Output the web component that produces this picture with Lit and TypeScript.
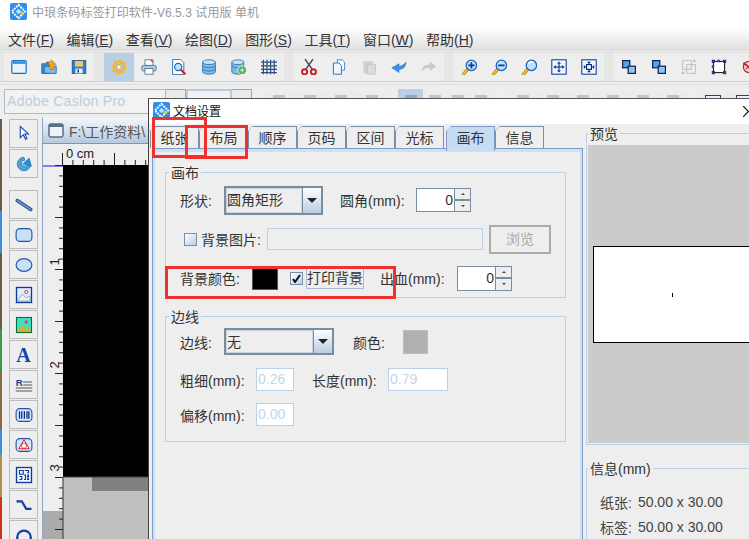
import { LitElement, html, css, svg } from "lit";
import { customElement } from "lit/decorators.js";

const mag = (sign: string) => svg`<line x1="3" y1="19" x2="9" y2="12" stroke="#b8860b" stroke-width="4" stroke-linecap="round"/><line x1="3" y1="19" x2="8" y2="13" stroke="#f3c53a" stroke-width="2" stroke-linecap="round"/><circle cx="13" cy="8" r="6.5" fill="#bfe0fb" stroke="#1466c8" stroke-width="1.6"/>${sign === "+" ? svg`<path d="M9 8h8M13 4v8" stroke="#12389a" stroke-width="2.2"/>` : sign === "-" ? svg`<path d="M9 8h8" stroke="#12389a" stroke-width="2.2"/>` : svg`<path d="M9 6a5 4 0 0 1 6-2" stroke="#fff" fill="none" stroke-width="1.6"/>`}`;

const arrowsOut = svg`<rect x="1" y="1" width="18" height="18" fill="#f4f8ff" stroke="#0b3a94" stroke-width="1.300"/><path d="M10 3l-2.500 3h5zM10 17l-2.500-3h5zM3 10l3-2.500v5zM17 10l-3-2.500v5z" fill="#0b2f8a"/><rect x="9.300" y="6" width="1.400" height="8" fill="#0b2f8a"/><rect x="6" y="9.300" width="8" height="1.400" fill="#0b2f8a"/>`;
const arrowsIn = svg`<rect x="1" y="1" width="18" height="18" fill="#f4f8ff" stroke="#0b3a94" stroke-width="1.300"/><rect x="7" y="7" width="6" height="6" fill="#fff" stroke="#0b2f8a" stroke-width="1.500"/><path d="M10 6.500l-2.500-3h5zM10 13.500l-2.500 3h5zM6.500 10l-3-2.500v5zM13.500 10l3-2.500v5z" fill="#0b2f8a"/>`;
const pair = svg`<rect x="2" y="2" width="9" height="9" fill="#4ea4ee" stroke="#10204f" stroke-width="1.500"/><rect x="9" y="9" width="9" height="9" fill="#8cc6f5" stroke="#10204f" stroke-width="1.500"/>`;

const toolIcons: Record<string, unknown> = {
  window: svg`<rect x="1" y="2" width="18" height="16" rx="1.500" fill="#e8f2fc" stroke="#1b6fbd" stroke-width="1.500"/><rect x="2" y="3" width="16" height="3" fill="#2f88d8"/>`,
  open: svg`<path d="M1 6h5l1-2h3v14H1z" fill="#3f95d8" stroke="#145a96"/><path d="M4 9h15v9H4z" fill="#79bdeb" stroke="#145a96"/><path d="M13 1l6 6h-3v6h-5V7H8z" fill="#f2a322" stroke="#b86e08" stroke-width=".7"/>`,
  save: svg`<rect x="1.500" y="2" width="17" height="16" fill="#2d80c9" stroke="#154f86"/><rect x="5" y="2.500" width="10" height="7" fill="#f7c46a"/><rect x="5.500" y="12" width="9" height="6" fill="#e8eef5"/><rect x="8" y="13" width="2" height="4" fill="#154f86"/>`,
  gear: svg`<circle cx="10" cy="10" r="6.500" fill="none" stroke="#eeb440" stroke-width="3.500"/><circle cx="10" cy="10" r="9" fill="none" stroke="#f0bd4c" stroke-width="2.400" stroke-dasharray="3.200 3.800"/><circle cx="10" cy="10" r="3" fill="#fff6d8" stroke="#c48a20"/>`,
  print: svg`<rect x="5" y="1" width="10" height="7" fill="#fff" stroke="#4c6a8c"/><path d="M12 1l3 3" stroke="#d22" stroke-width="1.500"/><rect x="1" y="8" width="18" height="7" rx="2" fill="#a9cdec" stroke="#2f6da6"/><rect x="5" y="12" width="10" height="7" fill="#fff" stroke="#4c6a8c"/>`,
  preview: svg`<path d="M2 0.500h10l4 4v15H2z" fill="#fff" stroke="#2a73b8" stroke-width="1.200"/><circle cx="9" cy="10" r="4.500" fill="#bfe0fb" stroke="#1466c8" stroke-width="1.400"/><line x1="12" y1="13" x2="18" y2="19" stroke="#c8242a" stroke-width="2.600"/>`,
  db: svg`<path d="M2 4v12c0 4 16 4 16 0V4z" fill="#7fbbe8" stroke="#1f6aa8"/><ellipse cx="10" cy="4" rx="8" ry="3" fill="#c6e2f6" stroke="#1f6aa8"/><path d="M2 8c0 4 16 4 16 0M2 12c0 4 16 4 16 0" fill="none" stroke="#1f6aa8"/>`,
  dbplus: svg`<path d="M1 4v12c0 4 15 4 15 0V4z" fill="#7fbbe8" stroke="#1f6aa8"/><ellipse cx="8.500" cy="4" rx="7.500" ry="3" fill="#c6e2f6" stroke="#1f6aa8"/><path d="M1 8c0 4 15 4 15 0" fill="none" stroke="#1f6aa8"/><circle cx="14" cy="14" r="5.500" fill="#4bb04f" stroke="#fff"/><path d="M11 14h6M14 11v6" stroke="#fff"/>`,
  grid: svg`<path d="M3 1v18M7.500 1v18M12 1v18M16.500 1v18M0 4h20M0 8.500h20M0 13h20M0 17h20" stroke="#2b4f7e" stroke-width="1.500"/>`,
  cut: svg`<path d="M5 0l9 13M15 0L6 13" stroke="#3f4a5c" stroke-width="1.800"/><circle cx="4.500" cy="16" r="3.200" fill="none" stroke="#c61f26" stroke-width="2.400"/><circle cx="15.500" cy="16" r="3.200" fill="none" stroke="#c61f26" stroke-width="2.400"/>`,
  copy: svg`<path d="M8 1h6l3 3v10H8z" fill="#fff" stroke="#2a73b8"/><path d="M3 5h7l3 3v11H3z" fill="#eef6fd" stroke="#2a73b8" stroke-width="1.200"/>`,
  paste: svg`<rect x="3" y="3" width="12" height="15" fill="#cfcfcf"/><rect x="8" y="7" width="10" height="12" fill="#dcdcdc" stroke="#c4c4c4"/>`,
  undo: svg`<path d="M19 4c-1 7-5 9-9 9v4L1 11l9-5v3c3 0 6-2 9-5z" fill="#3a92e0" stroke="#1d62ad" stroke-width=".6"/>`,
  redo: svg`<path d="M1 15c0-5 4-8 10-8V3l8 6-8 6v-4c-4 0-8 1-10 4z" fill="#c9c9c9"/>`,
  zin: mag("+"), zout: mag("-"), zfit: mag(""),
  fout: arrowsOut, fin: arrowsIn,
  up: pair,
  down: svg`${pair}`,
  grp: svg`<rect x="2" y="2" width="11" height="11" fill="none" stroke="#c8c8c8" stroke-width="1.500"/><rect x="7" y="7" width="11" height="11" fill="none" stroke="#c8c8c8" stroke-width="1.500"/><rect x="15" y="1" width="3" height="3" fill="#c0c0c0"/><rect x="1" y="16" width="3" height="3" fill="#c0c0c0"/>`,
  ungrp: svg`<rect x="3" y="3" width="14" height="14" fill="#fff" stroke="#111" stroke-width="1.300"/><path d="M1 1h4v4H1zM15 1h4v4h-4zM1 15h4v4H1zM15 15h4v4h-4zM8 1h3v3H8zM1 8h3v3H1z" fill="#33338c"/>`,
  del: svg`<circle cx="10" cy="10" r="7" fill="#f3d0d0" stroke="#c61f26" stroke-width="1.500"/><path d="M3 5l14 10" stroke="#c61f26" stroke-width="2"/><path d="M6 12l8-3" stroke="#222"/>`,
};

const sideIcons: Record<string, unknown> = {
  arrow: svg`<path d="M7 3v15l4-4 3 6 2-1-3-6h5z" transform="translate(0 -1)" fill="#fff" stroke="#1446ad" stroke-width="1.400"/>`,
  rotate: svg`<path d="M12 3a9 9 0 1 0 9 10h-5a4 4 0 1 1-3-6z" fill="#49a6dc" stroke="#1a6fa8"/><path d="M10 12l9-8 3 11z" fill="#2a8ccc" stroke="#1a6fa8" stroke-width=".6"/>`,
  line: svg`<line x1="3" y1="6" x2="21" y2="18" stroke="#23468f" stroke-width="4.500" stroke-linecap="round"/><line x1="3" y1="6" x2="21" y2="18" stroke="#6f92cf" stroke-width="2.200" stroke-linecap="round"/>`,
  rect: svg`<rect x="1.500" y="3.500" width="21" height="17" rx="5" fill="#c9e0f7" stroke="#1f55ad" stroke-width="1.500"/>`,
  ellipse: svg`<ellipse cx="12" cy="12" rx="10.500" ry="8.500" fill="#c9e0f7" stroke="#1f55ad" stroke-width="1.500"/>`,
  image: svg`<rect x="2" y="2" width="20" height="20" fill="#dfeefa" stroke="#0d3b9a" stroke-width="1.800"/><path d="M4 18l6-7 5 5 5-3v7H4z" fill="#f2f2f2" stroke="#7b8aa5"/><circle cx="15" cy="8" r="2.200" fill="none" stroke="#d83636" stroke-width="1.200"/>`,
  photo: svg`<rect x="2" y="2" width="20" height="20" fill="#40e0c8" stroke="#0f6a3a" stroke-width="1.500"/><path d="M3 21l7-9 5 6 3-3 4 6z" fill="#d8b021"/><circle cx="15" cy="8" r="2.500" fill="#e05050"/>`,
  rich: svg`<text x="1" y="13" font-family="Liberation Sans, sans-serif" font-weight="700" font-size="13" fill="#1c3f94">R</text><path d="M11 8h12M11 12h12M1 16h22M1 20h22" stroke="#555" stroke-width="1.300"/>`,
  barcode: svg`<rect x="1.500" y="3.500" width="21" height="17" rx="5" fill="#d5e6f8" stroke="#1f55ad" stroke-width="1.500"/><path d="M6 7v10M9 7v10M12.500 7v10M16 7v10M18.500 7v10" stroke="#0e2a86" stroke-width="1.700"/>`,
  shape: svg`<rect x="1.500" y="3.500" width="21" height="17" rx="5" fill="#d5e6f8" stroke="#1f55ad" stroke-width="1.500"/><path d="M12 5l7 12H5z" fill="#fff" stroke="#e01818" stroke-width="1.300"/><circle cx="12" cy="13" r="3.500" fill="none" stroke="#e01818"/>`,
  qr: svg`<rect x="2" y="2" width="20" height="20" fill="#eef5fc" stroke="#0d3b9a" stroke-width="1.800"/><path d="M6 6h5v5H6zM13 6h5v3h-2M6 14h3v4H6M12 12h2v6h-2M16 12h2v2h-2M16 16h2v2h-2" fill="none" stroke="#0d3b9a" stroke-width="1.500"/>`,
  curve: svg`<path d="M2 7h7l6 10h7" fill="none" stroke="#16409f" stroke-width="3"/>`,
  arc: svg`<path d="M3 24V15a9 9 0 0 1 18 0v9" fill="none" stroke="#16409f" stroke-width="3"/>`,
};

const g1 = ["window", "open", "save"];
const g2 = ["gear", "print", "preview", "db", "dbplus", "grid"];
const g3 = ["cut", "copy", "paste", "undo", "redo"];
const g4 = ["zin", "zout", "zfit", "fout", "fin"];
const g5 = ["up", "down", "grp", "ungrp", "del"];

const menus: [string, string][] = [["文件", "F"], ["编辑", "E"], ["查看", "V"], ["绘图", "D"], ["图形", "S"], ["工具", "T"], ["窗口", "W"], ["帮助", "H"]];
const tabs = ["纸张", "布局", "顺序", "页码", "区间", "光标", "画布", "信息"];
const sideTop = ["arrow", "rotate"];
const sideRest = ["line", "rect", "ellipse", "image", "photo", "text", "rich", "barcode", "shape", "qr", "curve", "arc"];

const marks = (n: number) => Array.from({ length: n }, () => html`<i></i>`);

const logo = html`<svg class="logo" viewBox="0 0 18 18"><rect width="18" height="18" rx="2" fill="#2f8fe8"/><path d="M9 2l7 7-7 7-7-7z" fill="none" stroke="#fff" stroke-width="2" stroke-dasharray="2 1"/><path d="M9 6l3 3-3 3-3-3z" fill="#bfe3ff"/><circle cx="13" cy="11" r="2" fill="#f3c63a"/></svg>`;

@customElement("app-root")
export class AppRoot extends LitElement {
  static styles = css`
    :host { display: block; width: 749px; height: 539px; overflow: hidden; position: relative; background: #eee;
      font-family: "Liberation Sans", "Noto Sans CJK SC", sans-serif; color: #333; font-size: 14px; }
    .title { height: 27px; background: #fff; display: flex; align-items: center; padding-left: 10px; gap: 5px; color: #999; font-size: 12.100px; box-sizing: border-box; padding-bottom: 5px; }
    .logo { width: 17px; height: 17px; flex: none; }
    .menu { height: 24px; background: linear-gradient(#fff, #dedede); display: flex; align-items: center; padding-left: 8px; gap: 12.600px; }
    .menu span { white-space: nowrap; }
    .menu u { text-decoration: underline; color: #334; }
    .tb { height: 30px; margin-top: 1px; background: #e6e6e6; display: flex; border-top: 1px solid #ddd; border-bottom: 1px solid #d0d0d0; padding-left: 4px; box-sizing: border-box; gap: 10px; }
    .grp { display: flex; background: #eee; }
    .btn { width: 30px; height: 28px; display: flex; align-items: center; justify-content: center; }
    .btn.on { background: #b9cfe6; }
    .btn svg { width: 16px; height: 16px; }
    .tb2 { height: 32px; box-sizing: border-box; margin-top: 2px; display: flex; background: #eee; padding: 4px 0 0 4px; overflow: hidden; border-top: 1px solid #ddd; }
    .fontbox { width: 162px; height: 25px; border: 1px solid #b0b8c0; background: #f2f2f2; color: #b9cde0; padding: 0 0 0 2px; line-height: 23px; font-size: 14px; letter-spacing: .3px; box-sizing: border-box; flex: none; }
    .drop { width: 20px; height: 25px; flex: none; border: 1px solid #a8a8a8; border-left: none; box-sizing: border-box; background: #eaeaea; }
    .sizebox { width: 46px; height: 25px; border: 2px solid #b8cce0; background: #f2f2f2; box-sizing: border-box; flex: none; }
    .tg { height: 28px; display: flex; justify-content: space-around; padding-top: 6px; box-sizing: border-box; background: linear-gradient(#eee, #e0e0e0); flex: none; }
    .tg i { display: block; width: 12px; height: 5px; background: #c4c4c4; }
    .tg1 { width: 125px; margin-left: 11px; }
    .tg2 { width: 25px; margin-left: 10px; background: #b9cfe6; }
    .tg2 i { background: #98aac0; }
    .tg3 { width: 70px; }
    .tg4 { width: 180px; margin-left: 15px; }
    .tg5 { width: 60px; margin-left: 10px; gap: 15px; justify-content: flex-start; padding-left: 7px; }
    .tg5 i { width: 14px; height: 10px; border: 1px solid #33445a; background: #eef; flex: none; }
    .work { display: flex; height: 423px; padding-top: 3px; box-sizing: border-box; }
    .strip { width: 2px; height: 420px; background: linear-gradient(#6a5a48 0 22%, #3f8fd8 22% 32%, #6a5a48 32% 50%, #3b9a48 50% 60%, #8a6a40 60% 74%, #3f8fd8 74% 80%, #b09050 80% 90%, #d03020 90%); flex: none; }
    .side { width: 29px; margin: 0 4px 0 7px; display: flex; flex-direction: column; gap: 1px; flex: none; }
    .side .sb { width: 27px; height: 27px; border: 1px solid #bcbcbc; background: #eee; display: flex; align-items: center; justify-content: center; flex: none; }
    .side .sb svg { width: 18px; height: 18px; overflow: hidden; }
    .side .glyph { font-family: "Liberation Serif", serif; font-weight: 700; font-size: 20px; line-height: 20px; color: #1445a6; }
    .side .sp { height: 10px; flex: none; }
    .docwrap { width: 105px; border-left: 1px solid #8ea4bf; flex: none; margin-top: -1px; }
    .doctab { height: 25px; background: linear-gradient(#f2f6fb, #b6c9e0); display: flex; align-items: center; gap: 5px; padding-left: 5px; font-size: 14px; color: #555; white-space: nowrap; overflow: hidden; border-bottom: 1px solid #7f97b5; }
    .doctab svg { width: 16px; height: 15px; flex: none; }
    .ruler { display: block; width: 105px; height: 395px; }

    .dialog { position: absolute; left: 148px; top: 98px; width: 601px; height: 441px; background: #eee; border-left: 1px solid #444; border-top: 1px solid #555; box-sizing: border-box; display: flex; flex-direction: column; }
    .dtitle { height: 25px; box-sizing: border-box; padding: 0 0 2px 4px; flex: none; background: #fff; display: flex; align-items: center; gap: 3px; font-size: 12px; color: #111; position: relative; }
    .close { position: absolute; right: 0; top: 7px; width: 6px; height: 11px; }
    .dbody { flex: 1; display: flex; min-height: 0; padding-left: 3px; }
    .left { width: 431px; flex: none; display: flex; flex-direction: column; padding-top: 2px; }
    .tabs { display: flex; height: 22px; flex: none; margin-left: -2px; }
    .tab { width: 49px; height: 22px; box-sizing: border-box; border: 1px solid #7d8fa3; border-bottom: none; text-align: center; line-height: 23px; font-size: 14px; color: #333;
      clip-path: polygon(5px 0, 100% 0, 100% 100%, 0 100%, 0 5px); margin-right: 0;
      background: linear-gradient(135deg, transparent 3px, #7d8fa3 3px, #7d8fa3 4px, #eee 4px); background-origin: border-box; }
    .tab.sel { background: linear-gradient(135deg, transparent 3px, #7d9bc9 3px, #7d9bc9 4px, #c6dcf2 4px); background-origin: border-box; border-color: #7d9bc9; height: 25px; margin: 0 0 -3px 2px; position: relative; z-index: 1; }
    .panel { flex: 1; border: 1px solid #7d9bc9; border-bottom: none; box-sizing: border-box; }
    .pinner { height: 100%; border: 2px solid #cfe0f3; border-top-width: 3px; border-bottom: none; box-sizing: border-box; padding: 20px 0 0 10px; display: flex; flex-direction: column; gap: 18px; }
    .group { position: relative; border: 1px solid #bcd0e6; box-sizing: border-box; width: 401px; flex: none; }
    .g1 { height: 126px; padding: 12px 0 0 14px; display: flex; flex-direction: column; gap: 9px; }
    .g2 { height: 126px; padding: 11px 0 0 14px; display: flex; flex-direction: column; gap: 0; }
    .legend { position: absolute; left: 3px; top: -10px; background: #eee; padding: 0 2px; font-size: 14px; line-height: 20px; color: #333; }
    .row { display: flex; align-items: center; height: 30px; flex: none; white-space: nowrap; }
    .lab44 { width: 44px; flex: none; }
    .combo { display: flex; height: 29px; border: 2px solid #7a8c9f; box-sizing: border-box; background: #eee; flex: none; }
    .c98 { width: 99px; }
    .c110 { width: 110px; height: 27px; }
    .combo .ct { flex: 1; border: 1px solid #c9d4e0; padding-left: 0; line-height: 23px; background: #eee; }
    .combo .cb { width: 18px; flex: none; background: linear-gradient(#fff, #b9cde2); border-left: 1px solid #7a8c9f; display: flex; align-items: center; justify-content: center; }
    .combo .cb i { border: 5px solid transparent; border-top: 5px solid #222; border-bottom: none; display: block; }
    .ml18 { margin-left: 18px; }
    .ml17 { margin-left: 17px; }
    .w76 { width: 76px; flex: none; }
    .spin { display: flex; width: 55px; height: 24px; flex: none; border: 1px solid #7a8c9f; box-sizing: border-box; }
    .spin.tall { height: 25px; }
    .spin .sv { flex: 1; background: #fff; text-align: right; padding-right: 1px; line-height: 23px; font-size: 14px; border-bottom: 1px solid #fff; }
    .spin .sa { width: 15px; flex: none; display: flex; flex-direction: column; border-left: 1px solid #7a8c9f; background: #eee; }
    .spin .sa b { flex: 1; display: flex; align-items: center; justify-content: center; font-size: 0; }
    .spin .sa b + b { border-top: 2px solid #7a8c9f; }
    .spin .sa i { display: block; border: 2px solid transparent; }
    .spin .sa .u { border-bottom: 2px solid #444; border-top: none; }
    .spin .sa .d { border-top: 2px solid #444; border-bottom: none; }
    .chk { width: 13px; height: 13px; box-sizing: border-box; border: 1px solid #7a8ea6; background: linear-gradient(135deg, #fff, #b7cde6); flex: none; display: flex; align-items: center; justify-content: center; }
    .chk svg { width: 9px; height: 9px; }
    .ml4 { margin-left: 4px; }
    .chkl { margin-left: 4px; width: 64px; flex: none; }
    .field { width: 216px; height: 22px; flex: none; border: 1px solid #bcd0e6; box-sizing: border-box; margin-left: 2px; }
    .browse { width: 62px; height: 29px; flex: none; border: 2px solid #ababab; box-sizing: border-box; margin-left: 6px; text-align: center; line-height: 25px; color: #aaa; }
    .l72 { width: 72px; flex: none; }
    .swatch { width: 26px; height: 23px; flex: none; background: #000; border: 1px solid #555; box-sizing: border-box; }
    .ml12 { margin-left: 12px; }
    .focus { border: 1px solid #a8bcd2; height: 22px; line-height: 20px; box-sizing: border-box; margin-left: 3px; width: 58px; flex: none; }
    .l76 { width: 76px; flex: none; }
    .l76b { width: 77px; flex: none; margin-left: 16px; }
    .gray { width: 25px; height: 24px; flex: none; background: #b0b0b0; border: 1px solid #bbb; box-sizing: border-box; margin-left: 18px; }
    .rowb { height: 27px; margin-bottom: 13px; }
    .rowc { height: 23px; margin-bottom: 12px; }
    .inp { height: 23px; border: 1px solid #b8d0ea; background: #fff; box-sizing: border-box; color: #c3d6ea; line-height: 21px; padding-left: 1px; font-size: 14px; flex: none; width: 38px; }
    .w60 { width: 60px; }
    .ml19 { margin-left: 19px; }
    .right { flex: 1; padding: 9px 0 0 3px; display: flex; flex-direction: column; overflow: hidden; }
    .pv { position: relative; border: 1px solid #bcd0e6; border-right: none; height: 312px; box-sizing: border-box; padding: 11px 0 1px 1px; flex: none; }
    .pvin { background: #cbcbcb; height: 298px; padding-top: 101px; box-sizing: border-box; padding-left: 5px; }
    .paper { height: 97px; background: #fff; border: 1px solid #000; border-right: none; box-sizing: border-box; display: flex; align-items: center; justify-content: center; }
    .paper i { width: 1px; height: 4px; background: #000; display: block; margin-left: 2px; }
    .info { position: relative; border: 1px solid #bcd0e6; border-right: none; border-bottom: none; margin-top: 23px; flex: 1; padding: 23px 0 0 13px; display: flex; flex-direction: column; gap: 5px; font-size: 14px; }
    .info div { display: flex; gap: 6px; height: 20px; align-items: center; color: #444; }
    .pvl { left: 1px; top: -10px; }
    .red { position: absolute; border: 3px solid #f33030; box-sizing: border-box; pointer-events: none; }
    .ra { left: 152px; top: 117px; width: 55px; height: 41px; }
    .rb { left: 185px; top: 125px; width: 63px; height: 34px; }
    .rc { left: 165px; top: 266px; width: 231px; height: 33px; }
  `;

  private toolBtn(n: string, on = false) {
    return html`<div class="btn ${on ? "on" : ""}"><svg viewBox="0 0 20 20">${toolIcons[n]}</svg></div>`;
  }
  private sideBtn(n: string) {
    if (n === "text") return html`<div class="sb"><span class="glyph">A</span></div>`;
    return html`<div class="sb"><svg viewBox="0 0 24 24">${sideIcons[n]}</svg></div>`;
  }
  private spinner(v: string, tall = false) {
    return html`<div class="spin ${tall ? "tall" : ""}"><div class="sv">${v}</div><div class="sa"><b><i class="u"></i></b><b><i class="d"></i></b></div></div>`;
  }
  private ruler() {
    const top = [], left = [];
    for (let i = 0; i < 9; i++) {
      const x = 19.5 + i * 10.4;
      const h = i % 5 === 0 ? 12 : 5;
      top.push(svg`<line x1="${x}" x2="${x}" y1="${21 - h}" y2="21" stroke="#222"/>`);
    }
    for (let i = 0; i < 36; i++) {
      const y = 21.5 + i * 10.4;
      const long = i % 5 === 0;
      left.push(svg`<line x1="${long ? 12 : 16}" x2="20" y1="${y}" y2="${y}" stroke="#222"/>`);
    }
    return html`<svg class="ruler" viewBox="0 0 105 395">
      <rect width="105" height="395" fill="#eee"/>
      <rect y="367" width="20" height="28" fill="#ababab"/>
      ${top}${left}
      <text x="23" y="14" font-family="Liberation Sans, sans-serif" font-size="13" fill="#222">0 cm</text>
      <line x1="0" x2="20" y1="22" y2="22" stroke="#1a1ae0"/>
      ${["1", "2", "3"].map((t, i) => svg`<text transform="translate(16 ${118 + i * 103}) rotate(-90)" text-anchor="middle" font-family="Liberation Sans, sans-serif" font-size="13" fill="#222">${t}</text>`)}
      <rect x="20" y="21" width="85" height="312" fill="#000"/>
      <rect x="20" y="333" width="85" height="62" fill="#c0c0c0"/>
      <rect x="49" y="333" width="56" height="14" fill="#808080"/>
      <line x1="20" x2="20" y1="333" y2="395" stroke="#333"/>
      <line x1="20" x2="105" y1="333" y2="333" stroke="#444"/>
    </svg>`;
  }

  render() {
    return html`
      <div class="title">${logo}<span>中琅条码标签打印软件-V6.5.3 试用版 单机</span></div>
      <div class="menu">${menus.map(([a, k]) => html`<span>${a}(<u>${k}</u>)</span>`)}</div>
      <div class="tb">
        <div class="grp">${g1.map((n) => this.toolBtn(n))}</div>
        <div class="grp">${g2.map((n, i) => this.toolBtn(n, i === 0))}</div>
        <div class="grp">${g3.map((n) => this.toolBtn(n))}</div>
        <div class="grp">${g4.map((n) => this.toolBtn(n))}</div>
        <div class="grp">${g5.map((n) => this.toolBtn(n))}</div>
      </div>
      <div class="tb2">
        <div class="fontbox">Adobe Caslon Pro</div><div class="drop"></div>
        <div class="sizebox"></div><div class="drop"></div>
        <div class="tg tg1">${marks(4)}</div>
        <div class="tg tg2">${marks(1)}</div>
        <div class="tg tg3">${marks(3)}</div>
        <div class="tg tg4">${marks(6)}</div>
        <div class="tg tg5">${marks(2)}</div>
      </div>
      <div class="work">
        <div class="strip"></div>
        <div class="side">
          ${sideTop.map((n) => this.sideBtn(n))}
          <div class="sp"></div>
          ${sideRest.map((n) => this.sideBtn(n))}
        </div>
        <div class="docwrap">
          <div class="doctab"><svg viewBox="0 0 16 15"><rect x="1" y="1" width="14" height="13" rx="2" fill="#eef3f9" stroke="#5a6f88" stroke-width="1.500"/><rect x="1" y="1" width="14" height="3" fill="#5a6f88"/></svg><span>F:\\工作资料\\</span></div>
          ${this.ruler()}
        </div>
      </div>

      <div class="dialog">
        <div class="dtitle">${logo}<span>文档设置</span><svg class="close" viewBox="0 0 6 11"><path d="M0 0l5.500 5.500L0 11" fill="none" stroke="#111" stroke-width="1.200"/></svg></div>
        <div class="dbody">
          <div class="left">
            <div class="tabs">${tabs.map((t, i) => html`<div class="tab ${i === 6 ? "sel" : ""}">${t}</div>`)}</div>
            <div class="panel"><div class="pinner">
              <div class="group g1">
                <span class="legend">画布</span>
                <div class="row">
                  <span class="lab44">形状:</span>
                  <div class="combo c98"><div class="ct">圆角矩形</div><div class="cb"><i></i></div></div>
                  <span class="ml17 w76">圆角(mm):</span>
                  ${this.spinner("0")}
                </div>
                <div class="row">
                  <span class="chk ml4"></span><span class="chkl">背景图片:</span>
                  <div class="field"></div>
                  <div class="browse">浏览</div>
                </div>
                <div class="row">
                  <span class="l72">背景颜色:</span>
                  <div class="swatch"></div>
                  <span class="chk ml12"><svg viewBox="0 0 9 9"><path d="M1 5l2 3 5-7" fill="none" stroke="#111" stroke-width="2"/></svg></span>
                  <span class="focus">打印背景</span>
                  <span class="l76b">出血(mm):</span>
                  ${this.spinner("0", true)}
                </div>
              </div>
              <div class="group g2">
                <span class="legend">边线</span>
                <div class="row rowb">
                  <span class="lab44">边线:</span>
                  <div class="combo c110"><div class="ct">无</div><div class="cb"><i></i></div></div>
                  <span class="ml19">颜色:</span>
                  <div class="gray"></div>
                </div>
                <div class="row rowc">
                  <span class="l76">粗细(mm):</span><div class="inp">0.26</div>
                  <span class="ml18 l76">长度(mm):</span><div class="inp w60">0.79</div>
                </div>
                <div class="row rowc">
                  <span class="l76">偏移(mm):</span><div class="inp">0.00</div>
                </div>
              </div>
            </div></div>
          </div>
          <div class="right">
            <div class="pv">
              <span class="legend pvl">预览</span>
              <div class="pvin"><div class="paper"><i></i></div></div>
            </div>
            <div class="info">
              <span class="legend pvl">信息(mm)</span>
              <div><span>纸张:</span><span>50.00 x 30.00</span></div>
              <div><span>标签:</span><span>50.00 x 30.00</span></div>
            </div>
          </div>
        </div>
      </div>

      <div class="red ra"></div>
      <div class="red rb"></div>
      <div class="red rc"></div>
    `;
  }
}
